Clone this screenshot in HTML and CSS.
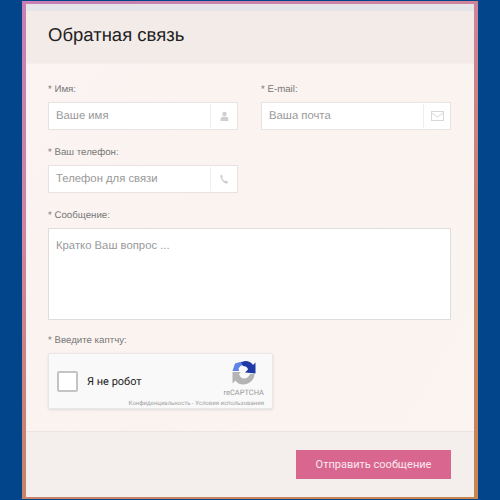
FILE: index.html
```html
<!DOCTYPE html>
<html lang="ru">
<head>
<meta charset="utf-8">
<title>Обратная связь</title>
<link rel="stylesheet" href="styles.css">
</head>
<body>
<div class="frame">
  <form class="modal">
    <div class="strip"></div>
    <header class="head"><h1>Обратная связь</h1></header>
    <div class="content">
      <div class="row">
        <div class="field">
          <label class="lbl">* Имя:</label>
          <div class="input"><span class="ph">Ваше имя</span><span class="addon">
            <svg width="9" height="11" viewBox="0 0 11 12"><circle cx="5.5" cy="3" r="2.7" fill="#cfcfcf"/><path d="M0.8 11.5V8.6C0.8 7.2 2 6.3 3.4 6.3H7.6C9 6.3 10.2 7.2 10.2 8.6V11.5Z" fill="#cfcfcf"/></svg>
          </span></div>
        </div>
        <div class="field">
          <label class="lbl">* E-mail:</label>
          <div class="input"><span class="ph">Ваша почта</span><span class="addon">
            <svg width="13" height="10" viewBox="0 0 13 10" fill="none" stroke="#d8d8d8"><rect x="0.5" y="0.5" width="12" height="9"/><path d="M0.8 2L6.5 6L12.2 2"/></svg>
          </span></div>
        </div>
      </div>
      <div class="row">
        <div class="field">
          <label class="lbl">* Ваш телефон:</label>
          <div class="input"><span class="ph">Телефон для связи</span><span class="addon">
            <svg width="9" height="10" viewBox="0 0 10 11"><path d="M1.9 0.4L3.2 2.9 2.4 4.1C2.8 5.6 3.7 6.9 5.2 7.8L6.6 7.2 9.3 8.9 8 10.6C4.4 10.8 0.4 6 0.4 1.6Z" fill="#cfcfcf"/></svg>
          </span></div>
        </div>
      </div>
      <div class="message">
        <label class="lbl">* Сообщение:</label>
        <div class="area"><span class="ph">Кратко Ваш вопрос ...</span></div>
      </div>
      <div class="captcha">
        <label class="lbl">* Введите каптчу:</label>
        <div class="recaptcha">
          <span class="box"></span>
          <span class="robot">Я не робот</span>
          <div class="brand">
            <svg width="24" height="25" viewBox="0 0 24 25">
              <path d="M0.5 11L3 3.5 8 2 13 1.5 11 5 8.5 6 6.5 8.5 7 11Z" fill="#5d84e6"/>
              <path d="M9 2.5L13 1C17 1 20 3 21 5L23.5 2.5V13.5L13 12.5 16 9.5C15.5 7.5 14 6 11 6Z" fill="#1f3aa5"/>
              <path d="M0.5 12H9L7 14C8 17 10 18.5 12 18.5 15 18.5 17 16.5 18 14H22.5C22.5 20 17 24.5 11 24.5 8 24.5 5 23 3.5 20.5L0.5 23.5Z" fill="#b4b4b4"/>
            </svg>
            <span class="rc">reCAPTCHA</span>
          </div>
          <span class="terms">Конфиденциальность - Условия использования</span>
        </div>
      </div>
    </div>
    <footer class="foot"><button type="button" class="send">Отправить сообщение</button></footer>
  </form>
</div>
</body>
</html>
```
FILE: styles.css
```css
* { box-sizing: border-box; }
html, body { margin: 0; height: 500px; overflow: hidden; }
body { background: #03458a; font-family: "Liberation Sans", Arial, sans-serif; text-rendering: geometricPrecision; }
.frame {
  width: 456px;
  height: 498px;
  margin: 1px 0 0 22px;
  padding: 3px 4px 2px 4px;
  background: linear-gradient(150deg, #c77fb6 0%, #cf85a0 30%, #c9826f 60%, #c98650 100%);
}
.modal {
  display: flex;
  flex-direction: column;
  height: 100%;
  background: linear-gradient(120deg, #fcf4f3 0%, #faf3ef 50%, #fbf5f2 100%);
}
.strip { height: 7px; background: #e5e4e8; flex: none; }
.head {
  height: 53px;
  flex: none;
  padding: 0 22px;
  display: flex;
  align-items: center;
  background: #f3ebe8;
  border-bottom: 1px solid #f5eeec;
}
h1 { margin: 0 0 5px; font-size: 18.5px; font-weight: 400; color: #222; }
.content { flex: 1; padding: 19px 23px 0 22px; }
.row { display: flex; gap: 23px; margin-bottom: 16px; }
.field { width: 190px; }
.lbl { display: block; height: 14px; line-height: 14px; font-size: 9.7px; color: #777; margin-bottom: 5px; }
.input {
  height: 28px;
  display: flex;
  align-items: center;
  background: #fff;
  border: 1px solid #e6e3e2;
}
.ph { font-size: 11.3px; color: #999; padding-left: 7px; flex: 1; }
.addon {
  width: 27px;
  height: 24px;
  display: flex;
  align-items: center;
  justify-content: center;
  border-left: 1px solid #efeded;
}
.message { margin-bottom: 14px; }
.area {
  height: 92px;
  padding-top: 7px;
  background: #fff;
  border: 1px solid #e0dcda;
}
.recaptcha {
  position: relative;
  width: 225px;
  height: 56px;
  display: flex;
  align-items: center;
  padding-left: 8px;
  background: #f9f9f9;
  border: 1px solid #e8e8e8;
  border-radius: 2px;
  box-shadow: 0 1px 3px rgba(0, 0, 0, 0.1);
}
.box {
  width: 21px;
  height: 21px;
  margin-right: 9px;
  background: #fff;
  border: 2px solid #c4c4c4;
  border-radius: 2px;
  flex: none;
}
.robot { font-size: 11px; color: #222; font-family: Roboto, "Liberation Sans", sans-serif; }
.brand {
  position: absolute;
  right: 8px;
  top: 6px;
  display: flex;
  flex-direction: column;
  align-items: center;
  gap: 3px;
}
.rc { font-size: 7.5px; color: #999; font-family: Roboto, sans-serif; }
.terms {
  position: absolute;
  right: 8px;
  bottom: 1px;
  font-size: 6px;
  color: #a0a0a0;
  font-family: Roboto, sans-serif;
}
.foot {
  height: 66px;
  flex: none;
  padding: 18px 23px 0 0;
  display: flex;
  justify-content: flex-end;
  align-items: flex-start;
  background: #f4eeec;
  border-top: 1px solid #ebe3e2;
}
.send {
  width: 155px;
  height: 29px;
  padding: 0;
  border: 0;
  background: #d9668f;
  color: #fbe8ee;
  font-family: Roboto, "Liberation Sans", sans-serif;
  font-size: 11px;
}
```
